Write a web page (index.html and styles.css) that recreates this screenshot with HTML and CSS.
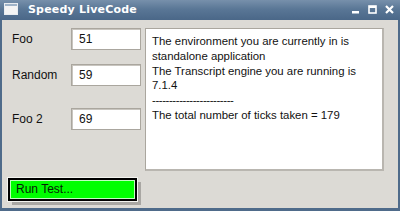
FILE: index.html
```html
<!DOCTYPE html>
<html lang="en">
<head>
  <meta charset="UTF-8">
  <title>Speedy LiveCode</title>
  <link rel="stylesheet" href="styles.css">
</head>
<body>
  <div class="window">
    <!-- Title bar -->
    <div class="titlebar">
      <div class="app-icon"></div>
      <span class="title">Speedy LiveCode</span>
      <div class="controls">
        <svg width="8" height="8" viewBox="0 0 8 8"><rect x="0" y="5" width="7" height="2.5" fill="#fff"/></svg>
        <svg width="9" height="9" viewBox="0 0 9 9"><rect x="1" y="1" width="7" height="7" fill="none" stroke="#fff" stroke-width="1.6"/><rect x="1" y="1" width="7" height="2" fill="#fff"/></svg>
        <svg width="9" height="9" viewBox="0 0 9 9"><path d="M1 1 L8 8 M8 1 L1 8" stroke="#fff" stroke-width="2.2"/></svg>
      </div>
    </div>

    <!-- Stack content -->
    <div class="card">
      <div class="main">
        <div class="fields">
          <div class="row">
            <span class="label">Foo</span>
            <div class="field">51</div>
          </div>
          <div class="row">
            <span class="label">Random</span>
            <div class="field">59</div>
          </div>
          <div class="row row-last">
            <span class="label">Foo 2</span>
            <div class="field">69</div>
          </div>
        </div>
        <div class="output">
          The environment you are currently in is<br>
          standalone application<br>
          The Transcript engine you are running is<br>
          7.1.4<br>
          <span class="dashes">------------------------</span><br>
          The total number of ticks taken = 179
        </div>
      </div>
      <div class="footer">
        <div class="run-btn">Run Test...</div>
      </div>
    </div>
  </div>
</body>
</html>
```

FILE: styles.css
```css
/* Reset */
body, html {
  margin: 0;
  padding: 0;
  width: 400px;
  height: 211px;
  overflow: hidden;
  font-family: "Liberation Sans", Arial, sans-serif;
}

/* Window frame */
.window {
  width: 400px;
  height: 211px;
  box-sizing: border-box;
  display: flex;
  flex-direction: column;
  background: #4f6b8a;
  padding: 0 2px 3px 2px;
}

.titlebar {
  height: 20px;
  display: flex;
  align-items: center;
  background: linear-gradient(#7790ab, #5a7796 45%, #4a6788);
  margin: 0 -2px;
  padding: 0 6px 0 4px;
}

.app-icon {
  width: 12px;
  height: 10px;
  margin-top: -2px;
  background: linear-gradient(#9fb3c8 0, #9fb3c8 2px, #f4f4f4 2px);
  border: 1px solid #e8ecf0;
}

.title {
  margin-left: 10px;
  margin-top: -2px;
  color: #fff;
  font-family: "DejaVu Sans", sans-serif;
  font-weight: bold;
  font-size: 11px;
  letter-spacing: 0.2px;
}

.controls {
  margin-left: auto;
  margin-top: -1px;
  display: flex;
  align-items: center;
  gap: 8px;
}

/* Content */
.card {
  flex: 1;
  background: #dcdad5;
  display: flex;
  flex-direction: column;
}

.main {
  display: flex;
  padding: 8px 0 0 0;
}

.fields {
  width: 143px;
}

.row {
  display: flex;
  align-items: center;
  height: 22px;
  margin-bottom: 14px;
}

.row:nth-child(2) {
  margin-bottom: 22px;
}

.label {
  width: 69px;
  box-sizing: border-box;
  padding-left: 10px;
  font-size: 12px;
  color: #111;
}

.field {
  width: 70px;
  height: 22px;
  box-sizing: border-box;
  background: #fff;
  border: 1px solid #aaa69e;
  box-shadow: inset 1px 1px 0 #c8c5bf;
  padding: 3px 0 0 7px;
  font-size: 12px;
  color: #111;
}

.output {
  width: 239px;
  height: 143px;
  box-sizing: border-box;
  background: #fff;
  border: 1px solid #aaa69e;
  border-right: 2px solid #b9b6b0;
  border-bottom: 2px solid #b9b6b0;
  padding: 5px 0 0 6px;
  font-size: 11.4px;
  line-height: 14.8px;
  color: #111;
}

.dashes {
  letter-spacing: -0.4px;
}

.footer {
  padding: 7px 0 0 6px;
}

.run-btn {
  width: 129px;
  height: 23px;
  box-sizing: border-box;
  background: #00ff00;
  border: 2px solid #000;
  outline: 1px solid #f4f4f0;
  box-shadow: inset 0 0 0 1px #c0ffc0, 4px 4px 0 #a9a7a3;
  padding: 2px 0 0 6px;
  font-size: 12px;
  color: #062206;
}
```
